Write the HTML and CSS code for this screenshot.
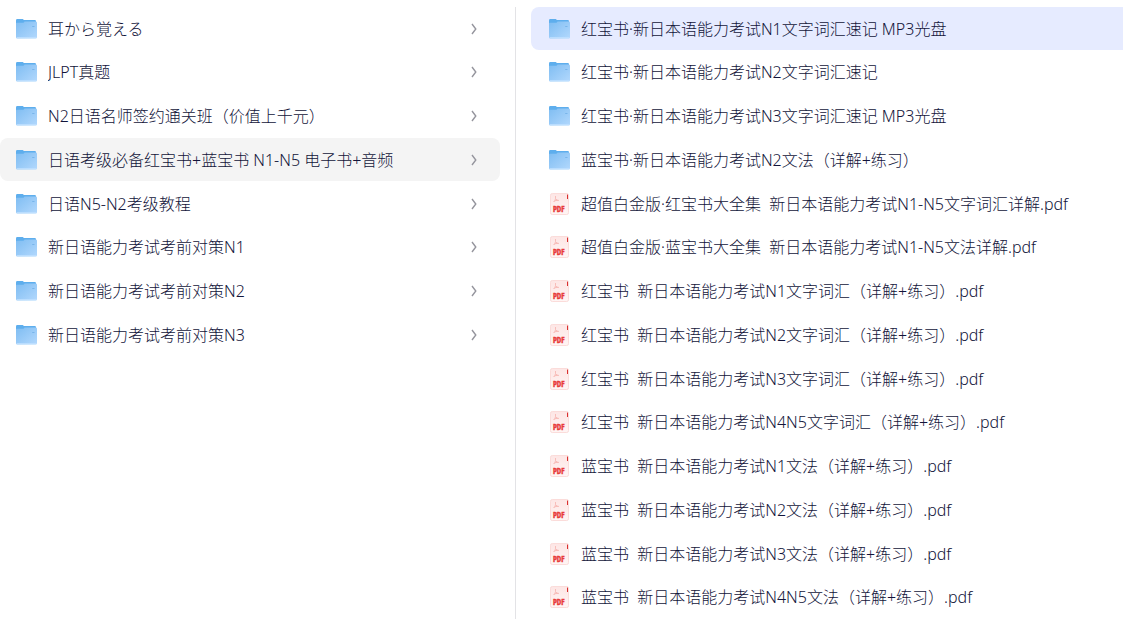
FILE: index.html
```html
<!DOCTYPE html>
<html lang="zh-CN">
<head>
<meta charset="utf-8">
<meta name="viewport" content="width=device-width, initial-scale=1">
<title>日语考级必备红宝书+蓝宝书</title>
<link rel="stylesheet" href="styles.css">
</head>
<body>
<svg class="sprite" aria-hidden="true">
  <defs>
    <linearGradient id="folder-fill" x1="0" y1="0" x2="1" y2="1">
      <stop offset="0" stop-color="#7fbdf2"/>
      <stop offset="1" stop-color="#b2d8fd"/>
    </linearGradient>
    <linearGradient id="pdf-fill" x1="0" y1="0" x2="0" y2="1">
      <stop offset="0" stop-color="#fde6e5"/>
      <stop offset="1" stop-color="#fff5f4"/>
    </linearGradient>
    <symbol id="folder" viewBox="0 0 22 22">
      <path d="M0 2.400Q0 1 1.200 1H6.600Q7.400 1 7.700 2H18.800Q20 2 20 3.200V8H0Z" fill="#5eaeed"/>
      <path d="M0 5.500Q0 4.700 .8 4.700H7Q8 4.700 8.500 3.500H19.700Q21 3.500 21 4.800V19Q21 20.500 19.600 20.500H1.400Q0 20.500 0 19Z" fill="url(#folder-fill)"/>
      <path d="M.8 19.700H20.200" stroke="#c0e1ff" stroke-width="1"/>
      <path d="M16.200 8.500H18.500" stroke="#79b5ea" stroke-width="1"/>
    </symbol>
    <symbol id="pdf" viewBox="0 0 22 24">
      <rect x="1.500" y="1.500" width="18" height="21" rx="1.800" fill="url(#pdf-fill)" stroke="#fbdcda"/>
      <path d="M18 2.500H18.500Q19 2.500 19 3V7H18Z" fill="#d9302f"/>
      <path d="M6.500 4V6.500Q6.500 8.500 4.500 10M6.500 6.500Q7.500 8.500 10 8.500M5 9.300Q7 8 9 8.500" fill="none" stroke="#f8bdb9" stroke-width="1"/>
      <text x="4" y="20" class="pdf-label">PDF</text>
    </symbol>
    <symbol id="chevron" viewBox="0 0 8 12">
      <path d="M2 1L5.800 6L2 11" fill="none" stroke="#95959d" stroke-width="1.400"/>
    </symbol>
  </defs>
</svg>
<main class="browser">
  <nav class="column column-parent" aria-label="文件夹">
    <ul class="list">
      <li><a class="row" href="#"><svg class="icon"><use href="#folder"/></svg><span class="name" lang="ja">耳から覚える</span><svg class="chevron"><use href="#chevron"/></svg></a></li>
      <li><a class="row" href="#"><svg class="icon"><use href="#folder"/></svg><span class="name">JLPT真题</span><svg class="chevron"><use href="#chevron"/></svg></a></li>
      <li><a class="row" href="#"><svg class="icon"><use href="#folder"/></svg><span class="name">N2日语名师签约通关班（价值上千元）</span><svg class="chevron"><use href="#chevron"/></svg></a></li>
      <li><a class="row row-open" href="#" aria-current="true"><svg class="icon"><use href="#folder"/></svg><span class="name">日语考级必备红宝书+蓝宝书 N1-N5 电子书+音频</span><svg class="chevron"><use href="#chevron"/></svg></a></li>
      <li><a class="row" href="#"><svg class="icon"><use href="#folder"/></svg><span class="name">日语N5-N2考级教程</span><svg class="chevron"><use href="#chevron"/></svg></a></li>
      <li><a class="row" href="#"><svg class="icon"><use href="#folder"/></svg><span class="name">新日语能力考试考前对策N1</span><svg class="chevron"><use href="#chevron"/></svg></a></li>
      <li><a class="row" href="#"><svg class="icon"><use href="#folder"/></svg><span class="name">新日语能力考试考前对策N2</span><svg class="chevron"><use href="#chevron"/></svg></a></li>
      <li><a class="row" href="#"><svg class="icon"><use href="#folder"/></svg><span class="name">新日语能力考试考前对策N3</span><svg class="chevron"><use href="#chevron"/></svg></a></li>
    </ul>
  </nav>
  <section class="column column-child" aria-label="文件">
    <ul class="list">
      <li><a class="row row-selected" href="#" aria-current="true"><svg class="icon"><use href="#folder"/></svg><span class="name">红宝书·新日本语能力考试N1文字词汇速记 MP3光盘</span></a></li>
      <li><a class="row" href="#"><svg class="icon"><use href="#folder"/></svg><span class="name">红宝书·新日本语能力考试N2文字词汇速记</span></a></li>
      <li><a class="row" href="#"><svg class="icon"><use href="#folder"/></svg><span class="name">红宝书·新日本语能力考试N3文字词汇速记 MP3光盘</span></a></li>
      <li><a class="row" href="#"><svg class="icon"><use href="#folder"/></svg><span class="name">蓝宝书·新日本语能力考试N2文法（详解+练习）</span></a></li>
      <li><a class="row" href="#"><svg class="icon icon-pdf"><use href="#pdf"/></svg><span class="name">超值白金版·红宝书大全集  新日本语能力考试N1-N5文字词汇详解.pdf</span></a></li>
      <li><a class="row" href="#"><svg class="icon icon-pdf"><use href="#pdf"/></svg><span class="name">超值白金版·蓝宝书大全集  新日本语能力考试N1-N5文法详解.pdf</span></a></li>
      <li><a class="row" href="#"><svg class="icon icon-pdf"><use href="#pdf"/></svg><span class="name">红宝书  新日本语能力考试N1文字词汇（详解+练习）.pdf</span></a></li>
      <li><a class="row" href="#"><svg class="icon icon-pdf"><use href="#pdf"/></svg><span class="name">红宝书  新日本语能力考试N2文字词汇（详解+练习）.pdf</span></a></li>
      <li><a class="row" href="#"><svg class="icon icon-pdf"><use href="#pdf"/></svg><span class="name">红宝书  新日本语能力考试N3文字词汇（详解+练习）.pdf</span></a></li>
      <li><a class="row" href="#"><svg class="icon icon-pdf"><use href="#pdf"/></svg><span class="name">红宝书  新日本语能力考试N4N5文字词汇（详解+练习）.pdf</span></a></li>
      <li><a class="row" href="#"><svg class="icon icon-pdf"><use href="#pdf"/></svg><span class="name">蓝宝书  新日本语能力考试N1文法（详解+练习）.pdf</span></a></li>
      <li><a class="row" href="#"><svg class="icon icon-pdf"><use href="#pdf"/></svg><span class="name">蓝宝书  新日本语能力考试N2文法（详解+练习）.pdf</span></a></li>
      <li><a class="row" href="#"><svg class="icon icon-pdf"><use href="#pdf"/></svg><span class="name">蓝宝书  新日本语能力考试N3文法（详解+练习）.pdf</span></a></li>
      <li><a class="row" href="#"><svg class="icon icon-pdf"><use href="#pdf"/></svg><span class="name">蓝宝书  新日本语能力考试N4N5文法（详解+练习）.pdf</span></a></li>
    </ul>
  </section>
</main>
</body>
</html>
```
FILE: styles.css
```css
* { box-sizing: border-box; }

body {
  margin: 0;
  background: #fff;
  color: #12143a;
  font-family: "Noto Sans", "Noto Sans CJK SC", sans-serif;
  font-size: 16px;
  font-weight: 300;
  line-height: 24px;
}

.sprite {
  position: absolute;
  width: 0;
  height: 0;
}

.browser {
  display: grid;
  grid-template-columns: 516px minmax(0, 1fr);
  min-height: 100vh;
  padding-top: 7px;
}

.column { display: grid; }

.column-parent {
  padding-right: 15px;
  border-right: 1px solid #e3e3e6;
}

.column-child { padding-left: 15px; }

/* Both columns share the same row rhythm. */
.list {
  display: grid;
  grid-template-rows: repeat(14, 43px);
  align-content: space-between;
  margin: 0;
  padding: 0;
  list-style: none;
}

.row {
  display: flex;
  align-items: center;
  gap: 10px;
  height: 43px;
  padding: 0 22px 0 16px;
  color: inherit;
  text-decoration: none;
}

.column-child .row { padding: 0 16px 0 18px; }

.row-open {
  background: #f4f4f4;
  border-radius: 8px;
}

.row-selected {
  background: #e6ebff;
  border-radius: 8px 0 0 8px;
}

.icon {
  flex: none;
  width: 22px;
  height: 22px;
}

.icon-pdf { height: 24px; }

.pdf-label {
  fill: #e83a3a;
  stroke: #e83a3a;
  stroke-width: 0.4px;
  font-family: "Open Sans Condensed", "Liberation Sans Narrow", sans-serif;
  font-size: 8px;
  font-weight: 700;
}

.name {
  flex: 1;
  min-width: 0;
  overflow: hidden;
  white-space: pre;
  text-overflow: ellipsis;
}

.chevron {
  flex: none;
  width: 8px;
  height: 12px;
}
```
